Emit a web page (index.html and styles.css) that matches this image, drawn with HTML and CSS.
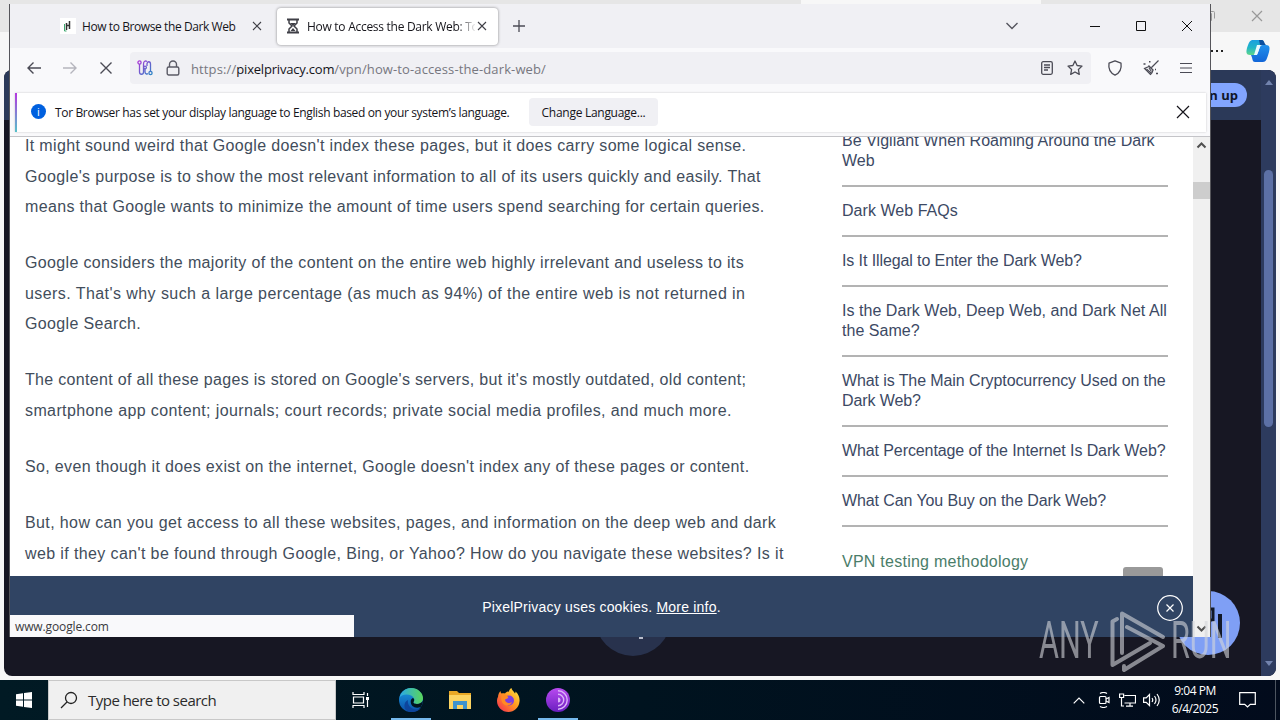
FILE: index.html
```
<!DOCTYPE html>
<html lang="en">
<head>
  <meta charset="utf-8">
  <title>How to Access the Dark Web</title>
  <link rel="stylesheet" href="styles.css">
</head>
<body>
  <div class="desktop">

    <!-- browser window at the back -->
    <div class="edge">
      <div class="edge-tabs">
        <div class="edge-tab"></div>
        <svg class="edge-restore" width="12" height="12" viewBox="0 0 12 12" fill="none" stroke="#999"><path d="M1.500 3.500h6v7h-6z M3.500 1.500h6a1 1 0 0 1 1 1v6"/></svg>
        <svg class="edge-close" width="12" height="12" viewBox="0 0 12 12" fill="none" stroke="#999" stroke-width="1.200"><path d="M1 1l10 10M11 1L1 11"/></svg>
      </div>
      <div class="edge-bar">
        <span class="dots"><i></i><i></i><i></i></span>
        <svg width="26" height="26" viewBox="0 0 26 26">
          <defs>
            <linearGradient id="cpA" x1="0" y1="0" x2="0" y2="1"><stop offset="0" stop-color="#1a9fe0"/><stop offset=".5" stop-color="#20b5c8"/><stop offset="1" stop-color="#5fd68a"/></linearGradient>
            <linearGradient id="cpB" x1="0" y1="0" x2="0" y2="1"><stop offset="0" stop-color="#2190ec"/><stop offset="1" stop-color="#1266d8"/></linearGradient>
          </defs>
          <path d="M8 2h8c3 0 2 2 4 5h-4c-3 0-3 3-5 8-1 2-2 2-4 2H5c-4 0-4-3-3-7C4 4 5 2 8 2z" fill="url(#cpA)"/>
          <path d="M14 2h3c2 0 2 3 4 5h-6z" fill="#0c4f9e"/>
          <path d="M18 24h-8c-3 0-2-3-4-7h4c3 0 3-3 5-8 1-2 2-2 4-2h2c4 0 4 3 3 7-2 7-3 10-6 10z" fill="url(#cpB)"/>
          <path d="M12 7h3.500l-3.500 10H9z" fill="#e9fbff"/>
        </svg>
      </div>
      <div class="edge-page">
        <div class="edge-view">
          <div class="edge-header"><span class="signup">Sign up</span></div>
          <div class="round-btn"><i></i></div>
          <div class="chat-btn">
            <svg width="64" height="64" viewBox="0 0 64 64" fill="none" stroke="#111827" stroke-width="3"><path d="M24 18h13v11h-8v7h6"/><path d="M44 23v24" stroke-width="4"/></svg>
          </div>
        </div>
        <div class="edge-scroll">
          <b class="up"></b>
          <div class="edge-thumb"></div>
          <b class="down"></b>
        </div>
      </div>
    </div>

    <!-- front window -->
    <div class="window">
      <div class="tabs">
        <div class="tab">
          <svg class="favicon" width="16" height="16" viewBox="0 0 16 16"><rect width="16" height="16" fill="#fff"/><path d="M6.500 5v7M9.500 3v8M7 7.500h3" stroke="#333" stroke-width="1.500"/><path d="M4.500 6v7h2" stroke="#3aa76d" fill="none"/></svg>
          <span class="tab-title t1">How to Browse the Dark Web</span>
          <svg class="tab-close" width="10" height="10" viewBox="0 0 10 10"><path d="M1 1l8 8M9 1L1 9"/></svg>
        </div>
        <div class="tab active">
          <svg class="favicon" width="14" height="16" viewBox="0 0 14 16" fill="none" stroke="#3f3f46" stroke-width="1.500"><path d="M1 1.500h12M1 14.500h12" stroke-width="2"/><path d="M3 2v3l3 3-3 3v3M11 2v3L8 8l3 3v3"/><path d="M4 5h6L7 8zM4.500 13L7 10l2.500 3z" fill="#3f3f46" stroke="none"/></svg>
          <span class="tab-title t2">How to Access the Dark Web: Tor</span>
          <svg class="tab-close" width="10" height="10" viewBox="0 0 10 10"><path d="M1 1l8 8M9 1L1 9"/></svg>
        </div>
        <svg class="new-tab" width="14" height="14" viewBox="0 0 14 14"><path d="M7 1v12M1 7h12"/></svg>
        <div class="win-buttons">
          <svg class="chev" width="14" height="8" viewBox="0 0 14 8"><path d="M1.500 1L7 6.500 12.500 1" stroke="#55555e" stroke-width="1.400"/></svg>
          <svg width="10" height="10" viewBox="0 0 10 10"><path d="M0 5.500h10"/></svg>
          <svg width="10" height="10" viewBox="0 0 10 10"><path d="M.5.5h9v9h-9z"/></svg>
          <svg width="10" height="10" viewBox="0 0 10 10"><path d="M0 0l10 10M10 0L0 10"/></svg>
        </div>
      </div>

      <div class="toolbar">
        <svg class="nav-icon" width="16" height="16" viewBox="0 0 16 16"><path d="M15 8H2M7.500 2.500L2 8l5.500 5.500"/></svg>
        <svg class="nav-icon off" width="16" height="16" viewBox="0 0 16 16"><path d="M1 8h13M8.500 2.500L14 8l-5.500 5.500"/></svg>
        <svg class="nav-icon" width="16" height="16" viewBox="0 0 16 16"><path d="M2.500 2.500l11 11M13.500 2.500l-11 11"/></svg>
        <div class="urlbar">
          <svg class="circuit" width="16" height="16" viewBox="0 0 16 16" fill="none" stroke-width="1.300">
            <defs><linearGradient id="cir" gradientUnits="userSpaceOnUse" x1="0" y1="0" x2="16" y2="16"><stop offset="0" stop-color="#b82fd8"/><stop offset="1" stop-color="#1f8fc4"/></linearGradient></defs>
            <g stroke="url(#cir)"><circle cx="2.500" cy="2.500" r="1.600"/><circle cx="13.500" cy="13" r="1.600"/><circle cx="8" cy="7.500" r="1.400"/><path d="M2.500 4v8c0 3 4 3 4 0V4c0-3 2-3.500 3.500-2.500M8 9v3c0 2 2 2.500 3 1.500M10 6V4c0-3 3.500-3 3.500 0v7.500"/></g>
          </svg>
          <svg class="lock" width="14" height="16" viewBox="0 0 14 16" fill="none" stroke="#5b5b66" stroke-width="1.400"><rect x="1.200" y="7" width="11.600" height="8" rx="1.500"/><path d="M3.500 7V4.500a3.500 3.500 0 0 1 7 0V7"/></svg>
          <span class="url">https://<b>pixelprivacy.com</b>/vpn/how-to-access-the-dark-web/</span>
          <svg class="reader" width="12" height="14" viewBox="0 0 12 14" fill="none" stroke="#4b4b55" stroke-width="1.300"><rect x=".7" y=".7" width="10.600" height="12.600" rx="1.500"/><path d="M3 4h6M3 6.500h6M3 9h4"/></svg>
          <svg class="star" width="16" height="16" viewBox="0 0 16 16" fill="none" stroke="#4b4b55" stroke-width="1.300" stroke-linejoin="round"><path d="M8 1l2.100 4.500 4.900.6-3.600 3.400.9 4.900L8 12l-4.300 2.400.9-4.900L1 6.100l4.900-.6z"/></svg>
        </div>
        <div class="tools">
          <svg width="16" height="16" viewBox="0 0 16 16" fill="none" stroke="#4b4b55" stroke-width="1.300" stroke-linejoin="round"><path d="M8 .8l6 2.400c.8 5.500-1.200 9.800-6 12-4.800-2.200-6.800-6.500-6-12z"/></svg>
          <svg width="16" height="16" viewBox="0 0 16 16" fill="none" stroke="#4b4b55" stroke-width="1.200"><path d="M15.500.5L8.500 7.500M5.500 5.500l5 5M6 6.500L1.500 8.500l6 6c1.500-1 2-2.500 2.500-4.500z"/><path d="M3.500 9l4.500 4M6 8l2.500 3.500"/><path d="M.5 4h2M6 1.800h1.500M13 13.500h2M12 9.500h1" stroke-width="1.600"/></svg>
          <svg width="14" height="14" viewBox="0 0 14 14" fill="none" stroke="#4b4b55" stroke-width="1.200"><path d="M1 2.500h12M1 7h12M1 11.500h12"/></svg>
        </div>
      </div>

      <div class="notice">
        <span class="info">i</span>
        <span class="notice-text">Tor Browser has set your display language to English based on your system’s language.</span>
        <span class="notice-btn">Change Language...</span>
        <svg class="notice-close" width="14" height="14" viewBox="0 0 14 14" fill="none" stroke="#15141a" stroke-width="1.200"><path d="M1 1l12 12M13 1L1 13"/></svg>
      </div>

      <div class="content">
        <div class="page">
          <div class="article">
            <p>It might sound weird that Google doesn't index these pages, but it does carry some logical sense.<br>
              Google's purpose is to show the most relevant information to all of its users quickly and easily. That<br>
              means that Google wants to minimize the amount of time users spend searching for certain queries.</p>
            <p>Google considers the majority of the content on the entire web highly irrelevant and useless to its<br>
              <span class="wide">users. That's why such a large percentage (as much as 94%) of the entire web is not returned in</span><br>
              Google Search.</p>
            <p><span class="narrow">The content of all these pages is stored on Google's servers, but it's mostly outdated, old content;</span><br>
              <span class="mid">smartphone app content; journals; court records; private social media profiles, and much more.</span></p>
            <p>So, even though it does exist on the internet, Google doesn't index any of these pages or content.</p>
            <p><span class="mid">But, how can you get access to all these websites, pages, and information on the deep web and dark</span><br>
              <span class="mid">web if they can't be found through Google, Bing, or Yahoo? How do you navigate these websites? Is it</span></p>
          </div>
          <div class="sidebar">
            <ul>
              <li class="loose">Be Vigilant When Roaming Around the Dark<br>Web</li>
              <li class="loose">Dark Web FAQs</li>
              <li>Is It Illegal to Enter the Dark Web?</li>
              <li class="loose">Is the Dark Web, Deep Web, and Dark Net All<br>the Same?</li>
              <li>What is The Main Cryptocurrency Used on the<br>Dark Web?</li>
              <li>What Percentage of the Internet Is Dark Web?</li>
              <li>What Can You Buy on the Dark Web?</li>
            </ul>
            <a class="vpn">VPN testing methodology</a>
          </div>
          <div class="to-top"></div>
          <div class="cookies">
            <span>PixelPrivacy uses cookies. <u>More info</u>.</span>
            <svg class="cookie-close" width="26" height="26" viewBox="0 0 26 26" fill="none" stroke="#fff" stroke-width="1.200"><circle cx="13" cy="13" r="12.300"/><path d="M9.500 9.500l7 7M16.500 9.500l-7 7"/></svg>
          </div>
          <div class="status">www.google.com</div>
        </div>
        <div class="scrollbar">
          <svg width="17" height="17" viewBox="0 0 17 17" fill="none" stroke="#505050" stroke-width="2"><path d="M4.500 10.500l4-4 4 4"/></svg>
          <div class="thumb"></div>
          <svg width="17" height="17" viewBox="0 0 17 17" fill="none" stroke="#505050" stroke-width="2"><path d="M4.500 6.500l4 4 4-4"/></svg>
        </div>
      </div>
    </div>

    <div class="watermark">
      <span>ANY</span>
      <svg width="56" height="62" viewBox="0 0 56 62" fill="none" stroke="#d4d6da" stroke-width="4" stroke-linejoin="round" stroke-linecap="round"><path d="M7 9L2.500 11.500V55L40 33"/><path d="M12 43V3.500L53 27"/><path d="M17 17L53 36 14 60v-4"/></svg>
      <span>RUN</span>
    </div>

    <div class="taskbar">
      <div class="start">
        <svg width="16" height="16" viewBox="0 0 16 16" fill="#fff"><path d="M0 2.200L7 1.200v6.300H0zM8 1l8-1v7.500H8zM0 8.500h7v6.300l-7-1zM8 8.500h8V16l-8-1z"/></svg>
      </div>
      <div class="search">
        <svg width="18" height="18" viewBox="0 0 18 18" fill="none" stroke="#222" stroke-width="1.300"><circle cx="11" cy="7" r="5.500"/><path d="M7 11l-6 6"/></svg>
        <span>Type here to search</span>
      </div>
      <div class="task task-view">
        <svg width="17" height="16" viewBox="0 0 17 16" fill="none" stroke="#fff" stroke-width="1.200"><path d="M1 0v2.500h11V0M1 16v-2.500h11V16M1.500 5h10v6h-10zM15.500 1v3M15.500 8v7"/><path d="M14 5h3v3h-3z" fill="#fff" stroke="none"/></svg>
      </div>
      <div class="task on">
        <svg width="24" height="24" viewBox="0 0 24 24">
          <defs>
            <linearGradient id="eg1" x1="0" y1="0" x2="1" y2="0"><stop offset="0" stop-color="#2aa9e8"/><stop offset="1" stop-color="#5ad65a"/></linearGradient>
            <linearGradient id="eg2" x1="0" y1="0" x2="0" y2="1"><stop offset="0" stop-color="#1b9de2"/><stop offset="1" stop-color="#0b4fa8"/></linearGradient>
          </defs>
          <circle cx="12" cy="12" r="12" fill="url(#eg2)"/>
          <path d="M.5 9.500C2 4 6.500 0 12 0c7 0 12 5 12 10 0 4-3 6-6 6-2.500 0-4-1-3.500-2 1-1.500 1-2 .5-3.500C14 8 11 6.500 7.500 6.500c-3 0-5.500 1-7 3z" fill="url(#eg1)"/>
          <path d="M9 12c-1 5 3 9.500 8 9.500 2 0 3.500-.7 5-1.500C19 24 13 25 9 23.300 4 21 4.500 14 9 12z" fill="#0d459c"/>
          <path d="M14.500 14c-.5 1 1 2 3.500 2 2.500 0 5-1.300 6-3.500-.3 3-1.200 5-2.300 6.500-6 2-10-1-10-5.500 0-2 1-3 2.300-3.500 1.500 1 1.500 2.500.5 4z" fill="#02141f"/>
        </svg>
      </div>
      <div class="task">
        <svg width="22" height="18" viewBox="0 0 22 18"><path d="M0 0h8l2 2h12v16H0z" fill="#e9a825"/><path d="M0 4h22v14H0z" fill="#fcd462"/><path d="M4 10h14v8h-4v-4H8v4H4z" fill="#3f94cf"/><path d="M8 14h6v4H8z" fill="#fcd462"/></svg>
      </div>
      <div class="task">
        <svg width="23" height="24" viewBox="0 0 23 24">
          <defs><linearGradient id="ff" x1="1" y1="0" x2="0" y2="1"><stop offset="0" stop-color="#fff04a"/><stop offset=".45" stop-color="#ff9a1f"/><stop offset="1" stop-color="#f52257"/></linearGradient></defs>
          <path d="M1 9C1 7 2 4.500 3.500 3c0 1 .5 2 1 2.500C6 5 7 5 8 5.500 9 4 11 2.500 11.500 4c1-2 1-3 3-4 0 2 2 3 3.500 5.500C18.500 5 18.500 4 18.500 3.500 21.500 6 23 10 22.500 13.500 22 19.500 17 24 11.500 24 5 24 0 19 0 13c0-1.500.3-3 1-4z" fill="url(#ff)"/>
          <circle cx="12" cy="12.500" r="5" fill="#7b3ee0"/>
          <path d="M5 7c3-1 5 0 6 2 1 1-1 1.500-3 2.500 0 3 4 5 7 2.500-1 4-8 5-10 0-1-3-1-5 0-7z" fill="#ff8a24"/>
        </svg>
      </div>
      <div class="task on">
        <svg width="24" height="24" viewBox="0 0 24 24" fill="none">
          <defs><linearGradient id="tor" x1="0" y1="0" x2="0" y2="1"><stop offset="0" stop-color="#b94af0"/><stop offset="1" stop-color="#6a1fc0"/></linearGradient></defs>
          <circle cx="12" cy="12" r="12" fill="url(#tor)"/><path d="M12 2.800a9.200 9.200 0 0 1 0 18.400M12 6.300a5.700 5.700 0 0 1 0 11.400" stroke="#dcb4fa" stroke-width="1.400"/><path d="M12 9.500a2.500 2.500 0 0 1 0 5z" fill="#dcb4fa"/>
        </svg>
      </div>
      <div class="tray">
        <svg class="tr-up" width="12" height="7" viewBox="0 0 12 7"><path d="M.7 6.300L6 1l5.300 5.300"/></svg>
        <svg class="tr-cam" width="12" height="16" viewBox="0 0 12 16"><rect x="1.500" y="4.500" width="6.500" height="7" rx="1"/><path d="M8 7l3-1.500v5L8 9M2 1.500Q5.500-.5 9 1.500M2 14.500Q5.500 16.500 9 14.500"/></svg>
        <svg class="tr-net" width="17" height="14" viewBox="0 0 17 14"><path d="M5.500 2.500h11v7.500H5.500M11 10v3M7 13.200h7M.6 1h4v3.500h-4zM2.500 4.500V13H5"/></svg>
        <svg class="tr-vol" width="17" height="14" viewBox="0 0 17 14"><path d="M.6 4.800h2.600L6.500 1.500v11L3.200 9.300H.6zM9 5q1.500 2 0 4M11.500 3q3 4 0 8M14 1q4.500 6 0 12"/></svg>
        <div class="clock"><span>9:04 PM</span><span>6/4/2025</span></div>
        <svg class="tr-note" width="17" height="16" viewBox="0 0 17 16"><path d="M.7.7h15.600v11.600h-5L8.500 15 5.700 12.300h-5z"/></svg>
        <i class="peek"></i>
      </div>
    </div>
  </div>
</body>
</html>
```
FILE: styles.css
```
* {
  box-sizing: border-box;
}

body {
  margin: 0;
  font-family: "Open Sans", "Noto Sans", sans-serif;
  font-size: 12px;
  overflow: hidden;
}

svg {
  display: block;
  flex: none;
}

.desktop {
  position: relative;
  width: 1280px;
  height: 720px;
  overflow: hidden;
  background: #f7f7f7;
}

/* back window */
.edge {
  height: 680px;
  display: flex;
  flex-direction: column;
}

.edge-tabs {
  height: 32px;
  background: #e6e6e6;
  display: flex;
  align-items: center;
  justify-content: flex-end;
  padding-right: 17px;
  gap: 35px;
}

.edge-tab {
  width: 240px;
  height: 8px;
  margin-right: 128px;
  align-self: flex-start;
  background: #f7f7f7;
}

.edge-bar {
  height: 38px;
  display: flex;
  align-items: center;
  justify-content: flex-end;
  padding-right: 9px;
  gap: 22px;
}

.dots {
  display: flex;
  gap: 3px;
}

.dots i {
  width: 2px;
  height: 2px;
  background: #222;
}

.edge-page {
  height: 606px;
  margin: 0 4px;
  display: flex;
  border-radius: 8px;
  overflow: hidden;
  background: #171723;
}

.edge-view {
  position: relative;
  flex: 1;
}

.edge-header {
  height: 50px;
  background: #2b3958;
  display: flex;
  justify-content: flex-end;
  align-items: center;
  padding-right: 14px;
}

.signup {
  background: #82a5ff;
  color: #10152a;
  font-weight: bold;
  font-size: 13px;
  line-height: 24px;
  padding: 0 9px 0 16px;
  border-radius: 12px;
}

.round-btn {
  position: absolute;
  left: 591px;
  bottom: 20px;
  width: 76px;
  height: 76px;
  border-radius: 50%;
  background: #28324d;
}

.round-btn i {
  position: absolute;
  left: 44px;
  bottom: 17px;
  width: 4px;
  height: 2px;
  background: #b9bdcb;
}

.chat-btn {
  position: absolute;
  right: 21px;
  bottom: 21px;
  width: 64px;
  height: 64px;
  border-radius: 50%;
  background: #7f9ff5;
}

.edge-scroll {
  width: 15px;
  background: #2d3b5e;
  display: flex;
  flex-direction: column;
  align-items: center;
  padding: 10px 0 10px;
}

.edge-scroll b {
  border: 4px solid transparent;
}

.edge-scroll .up {
  border-bottom: 5px solid #7283ad;
  border-top: 0;
}

.edge-scroll .down {
  border-top: 5px solid #7283ad;
  border-bottom: 0;
  margin-top: auto;
}

.edge-thumb {
  width: 9px;
  height: 257px;
  margin-top: 85px;
  border-radius: 5px;
  background: #5c70a5;
}

/* front window */
.window {
  position: absolute;
  left: 10px;
  top: 4px;
  width: 1200px;
  height: 633px;
  background: #f9f9fb;
  box-shadow: -1px 0 0 #55555a, 1px 0 0 #55555a;
  display: flex;
  flex-direction: column;
}

.tabs {
  height: 44px;
  background: #f0f0f4;
  display: flex;
  align-items: center;
  padding-left: 41px;
}

.tab {
  width: 222px;
  height: 37px;
  display: flex;
  align-items: center;
  padding-left: 9px;
  border-radius: 4px;
  color: #15141a;
  font-size: 12px;
}

.tab.active {
  width: 221px;
  margin-left: 4px;
  padding-left: 9px;
  background: #fff;
  box-shadow: 0 0 3px rgba(0, 0, 0, .45);
}

.tab-title {
  width: 168px;
  margin-left: 6px;
  overflow: hidden;
  white-space: nowrap;
}

.active .tab-title {
  margin-left: 7px;
  -webkit-mask-image: linear-gradient(to right, #000 150px, transparent 170px);
  mask-image: linear-gradient(to right, #000 150px, transparent 170px);
}

.t1 {
  letter-spacing: -.41px;
}

.t2 {
  letter-spacing: -.28px;
}

.tab-close {
  fill: none;
  stroke: #3f3f46;
  stroke-width: 1.100;
  margin-left: 2px;
}

.new-tab {
  fill: none;
  stroke: #4b4b55;
  stroke-width: 1.300;
  margin-left: 14px;
}

.win-buttons {
  margin-left: auto;
  display: flex;
  align-items: center;
  gap: 36px;
  padding-right: 18px;
  fill: none;
  stroke: #111;
}

.chev {
  margin-right: 35px;
}

.toolbar {
  height: 40px;
  display: flex;
  align-items: center;
  padding: 0 17px 0 16px;
}

.nav-icon {
  fill: none;
  stroke: #4b4b55;
  stroke-width: 1.400;
  margin-right: 20px;
}

.nav-icon.off {
  stroke: #b5b5bd;
}

.urlbar {
  width: 961px;
  height: 32px;
  margin-left: -4px;
  display: flex;
  align-items: center;
  padding: 0 8px 0 7px;
  border-radius: 4px;
  background: #f0f0f4;
}

.lock {
  margin-left: 13px;
}

.url {
  flex: 1;
  margin: 2px 0 0 11px;
  color: #77777f;
  font-size: 13px;
  letter-spacing: .12px;
  white-space: nowrap;
}

.url b {
  font-weight: normal;
  color: #15141a;
  letter-spacing: -.2px;
}

.star {
  margin-left: 14px;
}

.tools {
  display: flex;
  align-items: center;
  margin-left: auto;
  gap: 20px;
}

.tools svg:first-child {
  margin-right: 0;
  margin-left: -1px;
}

.notice {
  width: 1191px;
  height: 39px;
  margin: 5px 0 5px 5px;
  display: flex;
  align-items: center;
  padding: 0 15px 2px 14px;
  border: 1px solid #ececf0;
  border-left: 2px solid;
  border-image: linear-gradient(#b833e1, #52c5c9) 1 / 0 0 0 2px;
  background: #fff;
  color: #15141a;
  box-shadow: 0 0 2px rgba(0, 0, 0, .2);
}

.info {
  width: 15px;
  height: 15px;
  border-radius: 50%;
  background: #0060df;
  color: #fff;
  font-size: 11px;
  line-height: 15px;
  text-align: center;
}

.notice-text {
  width: 456px;
  margin: 1px 0 0 9px;
  font-size: 12px;
  letter-spacing: -.35px;
  white-space: nowrap;
}

.notice-btn {
  width: 129px;
  height: 28px;
  margin-left: 18px;
  border-radius: 4px;
  background: #f0f0f4;
  line-height: 30px;
  text-align: center;
  letter-spacing: -.28px;
}

.notice-close {
  margin-left: auto;
}

.content {
  height: 500px;
  display: flex;
  background: #fff;
  box-shadow: 0 -1px 0 #c4c4c8;
}

.page {
  position: relative;
  width: 1183px;
  overflow: hidden;
  display: flex;
  font-family: "Liberation Sans", Arial, sans-serif;
  background: #fff;
}

.article {
  width: 832px;
  margin-top: -6px;
  padding-left: 15px;
  color: #424d5b;
  font-size: 16px;
  line-height: 30.600px;
  letter-spacing: .345px;
  white-space: nowrap;
}

.article p {
  margin: 0 0 25.400px;
}

.wide {
  letter-spacing: .43px;
}

.mid {
  letter-spacing: .385px;
}

.narrow {
  letter-spacing: .32px;
}

.sidebar {
  width: 326px;
  margin-top: -6px;
  color: #3c4964;
  font-size: 16px;
  line-height: 20px;
  letter-spacing: -.1px;
  white-space: nowrap;
}

.sidebar ul {
  margin: 0;
  padding: 0;
  list-style: none;
}

.sidebar li {
  padding: 14px 0;
  border-bottom: 2px solid #b3b3b3;
}

.sidebar li:first-child {
  padding-top: 0;
}

.sidebar .loose {
  letter-spacing: .04px;
}

.vpn {
  display: block;
  margin-top: 25px;
  color: #4a7d69;
  letter-spacing: .25px;
}

.to-top {
  position: absolute;
  left: 1113px;
  top: 430px;
  width: 40px;
  height: 40px;
  border-radius: 3px;
  background: #999;
}

.cookies {
  position: absolute;
  left: 0;
  right: 0;
  bottom: 0;
  height: 61px;
  display: flex;
  align-items: center;
  justify-content: center;
  background: #304463;
  color: #fff;
  font-size: 14px;
  letter-spacing: .2px;
}

.cookie-close {
  position: absolute;
  right: 10px;
  top: 19px;
}

.status {
  position: absolute;
  left: 0;
  bottom: 0;
  width: 344px;
  height: 22px;
  padding-left: 5px;
  background: #f9f9fb;
  color: #3a3a40;
  font-family: "Open Sans", sans-serif;
  font-size: 12px;
  line-height: 24px;
  letter-spacing: -.12px;
}

.scrollbar {
  width: 17px;
  background: #f0f0f0;
  display: flex;
  flex-direction: column;
}

.scrollbar .thumb {
  height: 17px;
  margin: 28px 0 auto;
  background: #cdcdcd;
}

.watermark {
  position: absolute;
  left: 1039px;
  top: 610px;
  height: 62px;
  display: flex;
  align-items: center;
  opacity: .6;
  color: #d4d6da;
  font-family: Roboto, sans-serif;
  font-weight: 400;
  font-size: 51px;
  line-height: 62px;
}

.watermark span {
  width: 61px;
  white-space: nowrap;
  transform: scaleX(.6);
  transform-origin: 0 50%;
}

.watermark svg {
  margin: 0 5px 0 10px;
}

/* taskbar */
.taskbar {
  position: absolute;
  left: 0;
  bottom: 0;
  width: 1280px;
  height: 40px;
  display: flex;
  background: linear-gradient(to right, #011a24, #00131f 50%, #020b1c);
}

.start {
  width: 48px;
  display: flex;
  align-items: center;
  justify-content: center;
}

.search {
  width: 288px;
  display: flex;
  align-items: center;
  padding-left: 11px;
  gap: 10px;
  border: 1px solid #c8c8c8;
  background: #f0f0f0;
  color: #2b2b2b;
  font-size: 15px;
  letter-spacing: -.52px;
}

.task {
  width: 49px;
  display: flex;
  align-items: center;
  justify-content: center;
}

.task-view {
  width: 50px;
  padding-right: 2px;
}

.task.on {
  background: linear-gradient(#76b9ed, #76b9ed) center bottom / 40px 2px no-repeat;
}

.tray {
  margin-left: auto;
  display: flex;
  align-items: center;
  fill: none;
  stroke: #fff;
  stroke-width: 1.200;
  color: #fff;
}

.tr-cam {
  margin-left: 13px;
}

.tr-net {
  margin-left: 9px;
}

.tr-vol {
  margin-left: 7px;
}

.clock {
  width: 70px;
  display: flex;
  flex-direction: column;
  align-items: center;
  font-size: 12px;
  line-height: 18px;
  letter-spacing: -.45px;
}

.tr-note {
  margin-left: 9px;
}

.peek {
  width: 1px;
  height: 40px;
  margin: 0 4px 0 19px;
  background: #4d5560;
}
```
